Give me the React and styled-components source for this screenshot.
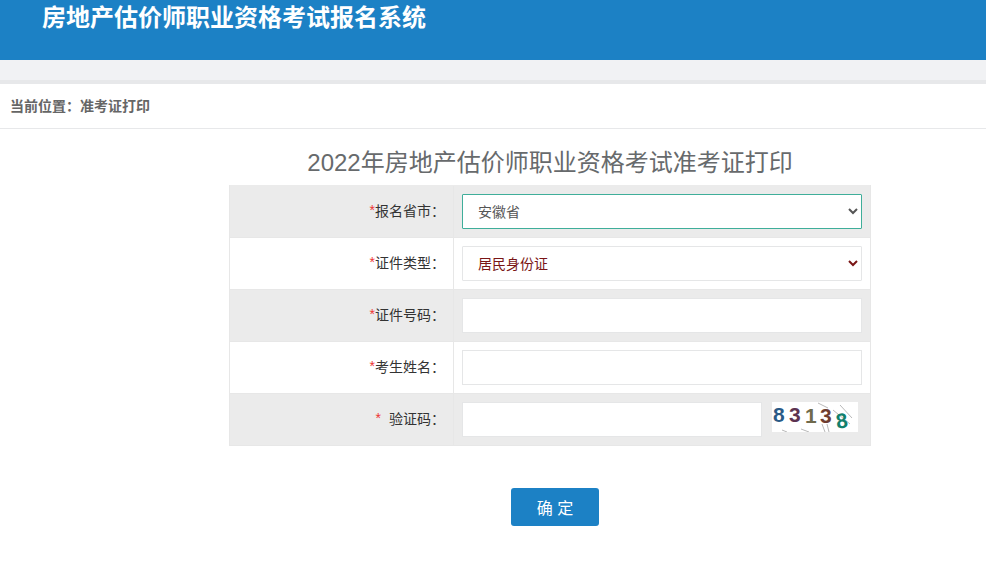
import React from "react";
import styled, { createGlobalStyle } from "styled-components";

const COLON = "\uFF1A";

const GlobalStyle = createGlobalStyle`
    html, body {
        margin: 0;
        padding: 0;
        background: #fff;
        font-family: "Liberation Sans", "Noto Sans CJK SC", sans-serif;
    }
`

const Header = styled.header`
    height: 60px;
    background: #1c81c5;
    box-sizing: border-box;
    padding-left: 42px;
`

const SiteTitle = styled.h1`
    margin: 0;
    font-size: 24px;
    line-height: 36px;
    font-weight: bold;
    color: #fff;
`

const Band = styled.div`
    height: 20px;
    background: #f1f2f4;
    border-bottom: 4px solid #e7e8ea;
`

const Crumb = styled.div`
    height: 44px;
    line-height: 44px;
    padding-left: 10px;
    font-size: 14px;
    font-weight: bold;
    color: #666;
    border-bottom: 1px solid #e7e8ea;
`

const Main = styled.main`
    width: 642px;
    margin-left: 229px;
`

const Heading = styled.h2`
    margin: 0;
    height: 56px;
    line-height: 68px;
    text-align: center;
    font-size: 24px;
    font-weight: normal;
    color: #676a6c;
    white-space: nowrap;
`

const Table = styled.div`
    border-left: 1px solid #e7e7e7;
    border-right: 1px solid #e7e7e7;
`

const Row = styled.div`
    display: grid;
    grid-template-columns: 224px 1fr;
    height: 52px;
    box-sizing: border-box;
    background: ${p => (p.$shaded ? "#ebebeb" : "#fff")};
    border-bottom: 1px solid #e7e7e7;
    &:first-child {
        height: 53px;
        padding-top: 1px;
    }
`

const Label = styled.label`
    display: flex;
    align-items: center;
    justify-content: flex-end;
    padding: 0 8px 3px 0;
    font-size: 14px;
    color: #333;
    border-right: 1px solid #e7e7e7;
`

const Star = styled.span`
    color: #e33;
    margin-right: ${p => (p.$gap ? "8px" : "0")};
`

const Field = styled.div`
    display: flex;
    align-items: flex-start;
    padding: 8px 0 0 8px;
`

const Select = styled.select`
    width: 400px;
    height: 35px;
    box-sizing: border-box;
    padding-left: 11px;
    font-family: inherit;
    font-size: 14px;
    background: #fff;
    color: ${p => (p.$dark ? "#7a1515" : "#555")};
    border: 1px solid ${p => (p.$active ? "#3fae9a" : "#e5e6e7")};
    border-radius: 1px;
    outline: none;
`

const Input = styled.input`
    width: ${p => (p.$short ? "300px" : "400px")};
    height: 35px;
    box-sizing: border-box;
    border: 1px solid #e5e6e7;
    background: #fff;
    outline: none;
`

const Captcha = styled.svg`
    width: 86px;
    height: 30px;
    margin-left: 10px;
    background: #fff;
    display: block;
`

const Actions = styled.div`
    display: flex;
    justify-content: center;
    padding: 42px 0 0 10px;
`

const Button = styled.button`
    width: 88px;
    height: 38px;
    border: none;
    border-radius: 3px;
    background: #1c81c5;
    color: #fff;
    font-family: inherit;
    font-size: 16px;
`

const digits = [
    { ch: "8", x: 1, y: 20, color: "#2a5a86", rot: 0 },
    { ch: "3", x: 17, y: 20, color: "#5c3350", rot: 0 },
    { ch: "1", x: 33, y: 21, color: "#6f6a4c", rot: 0 },
    { ch: "3", x: 48, y: 21, color: "#6e3d30", rot: 0 },
    { ch: "8", x: 64, y: 26, color: "#11806c", rot: -8 },
]

function CaptchaImage() {
    return (
        <Captcha viewBox="0 0 86 30">
            <g fill="none" stroke="#8a8a8a" strokeWidth="0.6">
                <path d="M46 1 L56 6" />
                <path d="M61 8 L78 22" />
                <path d="M68 3 L80 16" />
                <path d="M50 22 L53 30" />
                <path d="M55 22 L57 30" />
                <path d="M29 27 L37 30" />
                <path d="M10 28 L15 30" />
            </g>
            {digits.map((d, i) => (
                <text
                    key={i}
                    x={d.x}
                    y={d.y}
                    fill={d.color}
                    fontSize="21"
                    fontWeight="bold"
                    fontFamily="'Liberation Sans', sans-serif"
                    transform={`rotate(${d.rot} ${d.x + 6} ${d.y - 7})`}
                >
                    {d.ch}
                </text>
            ))}
        </Captcha>
    )
}

function App() {
    return (
        <>
            <GlobalStyle />
            <Header>
                <SiteTitle>房地产估价师职业资格考试报名系统</SiteTitle>
            </Header>
            <Band />
            <Crumb>当前位置{COLON}准考证打印</Crumb>
            <Main>
                <Heading>2022年房地产估价师职业资格考试准考证打印</Heading>
                <Table>
                    <Row $shaded>
                        <Label><Star>*</Star>报名省市{COLON}</Label>
                        <Field>
                            <Select $active defaultValue="安徽省">
                                <option>安徽省</option>
                            </Select>
                        </Field>
                    </Row>
                    <Row>
                        <Label><Star>*</Star>证件类型{COLON}</Label>
                        <Field>
                            <Select $dark defaultValue="居民身份证">
                                <option>居民身份证</option>
                            </Select>
                        </Field>
                    </Row>
                    <Row $shaded>
                        <Label><Star>*</Star>证件号码{COLON}</Label>
                        <Field><Input /></Field>
                    </Row>
                    <Row>
                        <Label><Star>*</Star>考生姓名{COLON}</Label>
                        <Field><Input /></Field>
                    </Row>
                    <Row $shaded>
                        <Label><Star $gap>*</Star>验证码{COLON}</Label>
                        <Field>
                            <Input $short />
                            <CaptchaImage />
                        </Field>
                    </Row>
                </Table>
                <Actions>
                    <Button>确 定</Button>
                </Actions>
            </Main>
        </>
    )
}

export default App
